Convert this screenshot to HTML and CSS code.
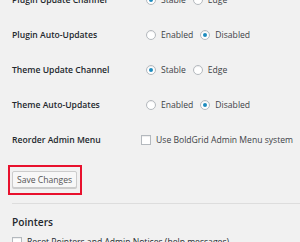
FILE: index.html
```html
<!DOCTYPE html>
<html lang="en">
<head>
  <meta charset="UTF-8">
  <meta name="viewport" content="width=device-width, initial-scale=1.0">
  <title>BoldGrid Settings</title>
  <link rel="stylesheet" href="styles.css">
</head>
<body>
  <!-- Settings page (scrolled part) -->
  <div class="wrap">
    <div class="form-table">
      <div class="row">
        <div class="row-label">Plugin Update Channel</div>
        <div class="row-field">
          <span class="radio checked"></span><span class="opt">Stable</span>
          <span class="radio"></span><span class="opt">Edge</span>
        </div>
      </div>
      <div class="row">
        <div class="row-label">Plugin Auto-Updates</div>
        <div class="row-field">
          <span class="radio"></span><span class="opt">Enabled</span>
          <span class="radio checked"></span><span class="opt">Disabled</span>
        </div>
      </div>
      <div class="row">
        <div class="row-label">Theme Update Channel</div>
        <div class="row-field">
          <span class="radio checked"></span><span class="opt">Stable</span>
          <span class="radio"></span><span class="opt">Edge</span>
        </div>
      </div>
      <div class="row">
        <div class="row-label">Theme Auto-Updates</div>
        <div class="row-field">
          <span class="radio"></span><span class="opt">Enabled</span>
          <span class="radio checked"></span><span class="opt">Disabled</span>
        </div>
      </div>
      <div class="row">
        <div class="row-label">Reorder Admin Menu</div>
        <div class="row-field">
          <span class="checkbox"></span><span class="opt">Use BoldGrid Admin Menu system</span>
        </div>
      </div>
    </div>

    <!-- Save button, highlighted -->
    <div class="submit">
      <span class="highlight"><button class="button" type="button">Save Changes</button></span>
    </div>

    <hr class="divider">

    <h2 class="section-title">Pointers</h2>
    <div class="check-line">
      <span class="checkbox"></span><span class="opt">Reset Pointers and Admin Notices (help messages)</span>
    </div>
  </div>
</body>
</html>
```

FILE: styles.css
```css
body {
  margin: 0;
  background: #f1f1f1;
  color: #23282d;
  font-family: "Open Sans", "Noto Sans", sans-serif;
  font-size: 8.6px;
  overflow: hidden;
}

.wrap {
  margin-top: -18px;
  padding-left: 12px;
}

/* rows of the settings table */
.row {
  display: flex;
  align-items: center;
  height: 35px;
}

.row-label {
  width: 134px;
  font-weight: 600;
}

.row-field {
  display: flex;
  align-items: center;
  color: #3c4146;
}

.opt {
  margin-right: 7px;
  white-space: nowrap;
}

.radio,
.checkbox {
  box-sizing: border-box;
  width: 10px;
  height: 10px;
  border: 1px solid #b4b9be;
  background: #fff;
  box-shadow: inset 0 1px 1px rgba(0, 0, 0, 0.07);
  margin-right: 5px;
  flex-shrink: 0;
}

.radio {
  border-radius: 50%;
  display: flex;
  align-items: center;
  justify-content: center;
}

.radio.checked::after {
  content: "";
  width: 4px;
  height: 4px;
  border-radius: 50%;
  background: #1e8cbe;
}

/* save button */
.submit {
  margin-top: 8px;
}

.highlight {
  display: inline-block;
  margin-left: -4px;
  border: 2px solid #e8112d;
  padding: 4px 3px 5px 2px;
}

.button {
  display: block;
  box-sizing: border-box;
  width: 65px;
  height: 17px;
  padding: 0;
  font-family: inherit;
  font-size: 8.6px;
  color: #555;
  background: #f7f7f7;
  border: 1px solid #ccc;
  border-radius: 2px;
  box-shadow: 0 1px 0 #ccc;
}

.divider {
  margin: 8px 0 0;
  border: 0;
  border-top: 1px solid #ddd;
}

.section-title {
  margin: 11px 0 0;
  font-size: 10.2px;
  font-weight: 600;
}

.check-line {
  display: flex;
  align-items: center;
  margin-top: 7px;
}
```
